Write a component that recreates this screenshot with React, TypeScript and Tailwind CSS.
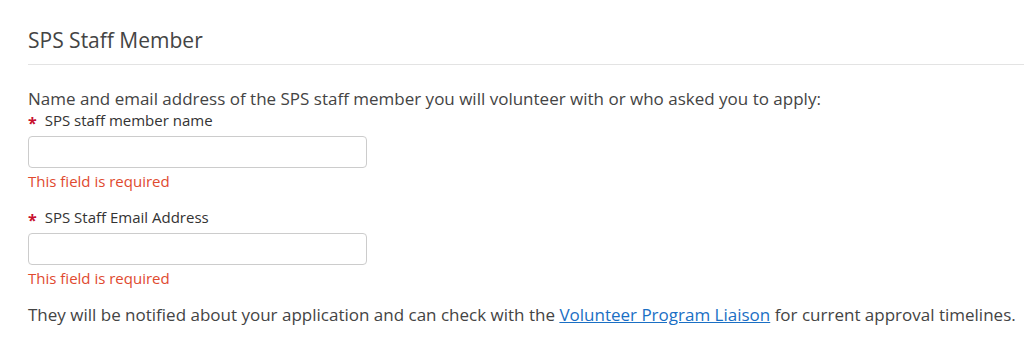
const Field = ({ label }: { label: string }) => (
  <div>
    <label className="flex items-center gap-[8px] text-[15px] leading-[20px] text-[#333]">
      <span className="text-[#c8102e] text-[16px] font-bold translate-y-[3px]">*</span>
      {label}
    </label>
    <input
      type="text"
      className="mt-[6px] block w-[339px] h-[32px] rounded-[4px] border border-[#ccc] bg-white"
    />
    <p className="mt-[3px] text-[15px] leading-[20px] text-[#e04a2f]">This field is required</p>
  </div>
)

export default function App() {
  return (
    <div className="min-h-screen bg-white pl-[28px] font-['Open_Sans',sans-serif] text-[#444]">
      {/* HEADER */}
      <div className="pt-[26px] pb-[10px] border-b border-[#e3e3e3]">
        <h2 className="text-[21px] leading-[28px] text-[#444]">SPS Staff Member</h2>
      </div>

      <p className="mt-[23px] text-[17px] leading-[22px]">
        Name and email address of the SPS staff member you will volunteer with or who asked you to apply:
      </p>

      <Field label="SPS staff member name" />
      <div className="mt-[16px]">
        <Field label="SPS Staff Email Address" />
      </div>

      <p className="mt-[16px] text-[17px] leading-[22px]">
        They will be notified about your application and can check with the{" "}
        <a href="#" className="text-[#1a6fc4] underline">Volunteer Program Liaison</a> for current approval timelines.
      </p>
    </div>
  )
}
